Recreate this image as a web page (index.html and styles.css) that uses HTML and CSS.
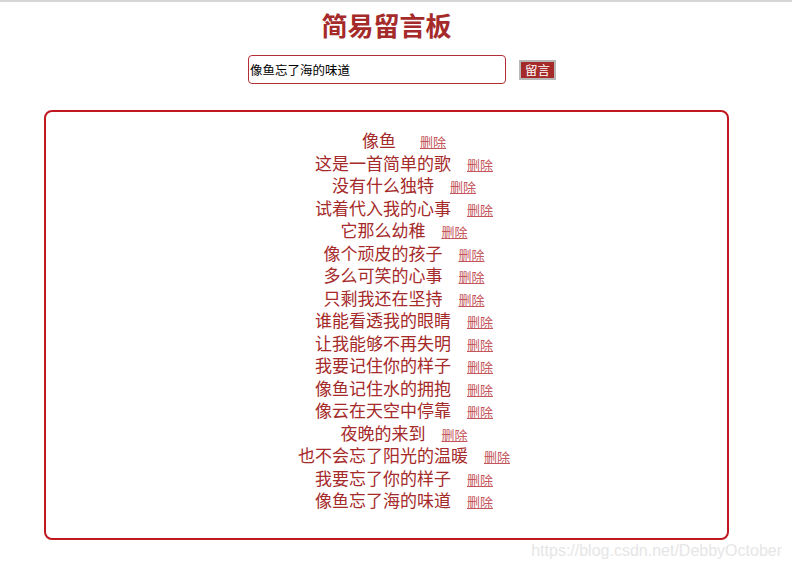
FILE: index.html
```html
<!DOCTYPE html>
<html lang="zh">
<head>
<meta charset="utf-8">
<title>简易留言板</title>
<link rel="stylesheet" href="styles.css">
</head>
<body>
<div class="page">
  <h1 class="title">简易留言板</h1>
  <div class="form-row">
    <input class="msg-input" type="text" value="像鱼忘了海的味道">
    <button class="msg-btn" type="button">留言</button>
  </div>
  <div class="board">
    <ul class="msg-list">
      <li class="msg first">像鱼<a class="del" href="#">删除</a></li>
      <li class="msg">这是一首简单的歌<a class="del" href="#">删除</a></li>
      <li class="msg">没有什么独特<a class="del" href="#">删除</a></li>
      <li class="msg">试着代入我的心事<a class="del" href="#">删除</a></li>
      <li class="msg">它那么幼稚<a class="del" href="#">删除</a></li>
      <li class="msg">像个顽皮的孩子<a class="del" href="#">删除</a></li>
      <li class="msg">多么可笑的心事<a class="del" href="#">删除</a></li>
      <li class="msg">只剩我还在坚持<a class="del" href="#">删除</a></li>
      <li class="msg">谁能看透我的眼睛<a class="del" href="#">删除</a></li>
      <li class="msg">让我能够不再失明<a class="del" href="#">删除</a></li>
      <li class="msg">我要记住你的样子<a class="del" href="#">删除</a></li>
      <li class="msg">像鱼记住水的拥抱<a class="del" href="#">删除</a></li>
      <li class="msg">像云在天空中停靠<a class="del" href="#">删除</a></li>
      <li class="msg">夜晚的来到<a class="del" href="#">删除</a></li>
      <li class="msg">也不会忘了阳光的温暖<a class="del" href="#">删除</a></li>
      <li class="msg">我要忘了你的样子<a class="del" href="#">删除</a></li>
      <li class="msg">像鱼忘了海的味道<a class="del" href="#">删除</a></li>
    </ul>
  </div>
</div>
<div class="watermark">https://blog.csdn.net/DebbyOctober</div>
</body>
</html>
```

FILE: styles.css
```css
html, body {
  margin: 0;
  padding: 0;
  background: #ffffff;
}
body {
  border-top: 2px solid #d6d6d6;
  font-family: "Noto Sans CJK SC", "Noto Sans", sans-serif;
}
.page {
  width: 773px;
}
.title {
  margin: 0;
  padding-top: 6px;
  height: 37px;
  line-height: 34px;
  text-align: center;
  font-size: 26px;
  font-weight: 700;
  color: #a52a2a;
}
.form-row {
  display: flex;
  align-items: center;
  margin-top: 10px;
  margin-left: 248px;
  gap: 13px;
}
.msg-input {
  box-sizing: border-box;
  width: 258px;
  height: 29px;
  margin: 0;
  padding: 0 1px;
  border: 1.5px solid #b22f35;
  border-radius: 4px;
  font-family: "Noto Sans CJK SC", sans-serif;
  font-size: 12.5px;
  color: #000;
  outline: none;
}
.msg-btn {
  box-sizing: border-box;
  width: 37px;
  height: 20px;
  margin: 0;
  padding: 0;
  border: 2px solid #b8b8b8;
  border-radius: 0;
  background: #a52a2a;
  color: #ffffff;
  font-family: "Noto Sans CJK SC", sans-serif;
  font-size: 12.5px;
  line-height: 16px;
}
.board {
  box-sizing: border-box;
  width: 685px;
  margin: 26px auto 0;
  padding: 17px 0 26px;
  border: 2px solid #c0181f;
  border-radius: 8px;
}
.msg-list {
  list-style: none;
  margin: 0;
  padding: 0 0 0 35px;
  text-align: center;
}
.msg {
  font-size: 17px;
  line-height: 22.5px;
  color: #a52a2a;
}
.del {
  margin-left: 16px;
  font-size: 13px;
  line-height: 1;
  color: #c4555a;
  text-decoration: underline;
}
.first .del {
  margin-left: 24px;
}
.watermark {
  margin-top: 3px;
  padding-right: 10px;
  text-align: right;
  font-family: "Liberation Sans", Arial, sans-serif;
  font-size: 16px;
  line-height: 16px;
  color: #e6e6e6;
}
```
